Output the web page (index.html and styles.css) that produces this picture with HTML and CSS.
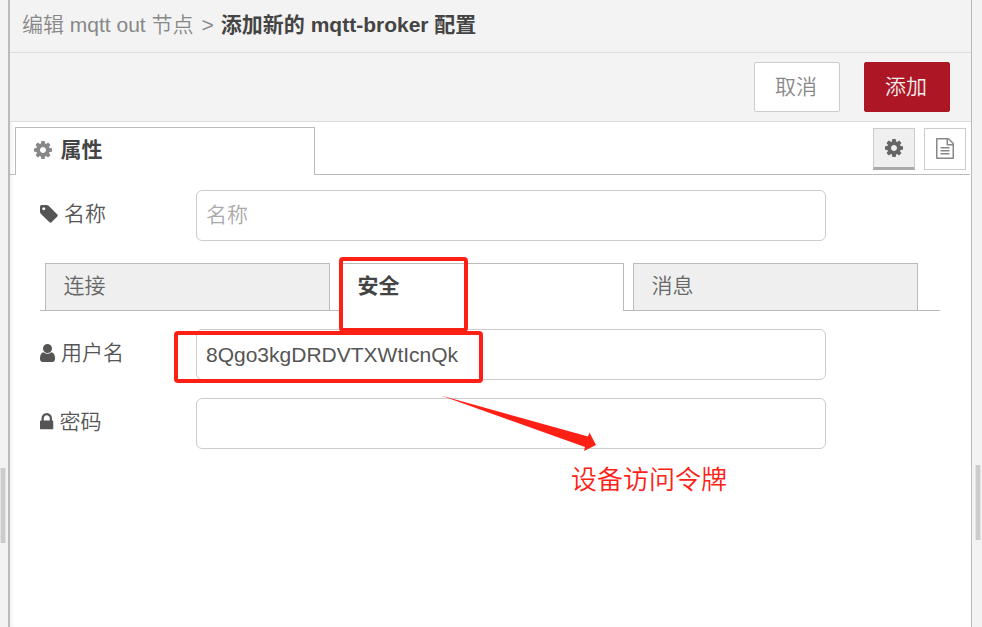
FILE: index.html
```html
<!DOCTYPE html>
<html lang="zh-CN">
<head>
<meta charset="utf-8">
<title>mqtt-broker 配置</title>
<link rel="stylesheet" href="styles.css">
</head>
<body>
<svg class="defs" width="0" height="0" aria-hidden="true">
  <symbol id="cog" viewBox="128 128 1536 1536"><path d="M1152 896q0-106-75-181t-181-75-181 75-75 181 75 181 181 75 181-75 75-181zm512-109v222q0 12-8 23t-20 13l-185 28q-19 54-39 91 35 50 107 138 10 12 10 25t-9 23q-27 37-99 108t-94 71q-12 0-26-9l-138-108q-44 23-91 38-16 136-29 186-7 28-36 28h-222q-14 0-24.500-8.500t-11.500-21.500l-28-184q-49-16-90-37l-141 107q-10 9-25 9-14 0-25-11-126-114-165-168-7-10-7-23 0-12 8-23 15-21 51-66.500t54-70.500q-27-50-41-99l-183-27q-13-2-21-12.500t-8-23.500v-222q0-12 8-23t19-13l186-28q14-46 39-92-40-57-107-138-10-12-10-24 0-10 9-23 26-36 98.500-107.500t94.500-71.500q13 0 26 10l138 107q44-23 91-38 16-136 29-186 7-28 36-28h222q14 0 24.500 8.500t11.500 21.500l28 184q49 16 90 37l142-107q9-9 24-9 13 0 25 10 129 119 165 170 7 8 7 22 0 12-8 23-15 21-51 66.500t-54 70.500q26 50 41 98l183 28q13 2 21 12.500t8 23.500z"/></symbol>
  <symbol id="file" viewBox="128 0 1536 1792"><path d="M1596 380q28 28 48 76t20 88v1152q0 40-28 68t-68 28h-1344q-40 0-68-28t-28-68v-1600q0-40 28-68t68-28h896q40 0 88 20t76 48zm-444-244v376h376q-10-29-22-41l-313-313q-12-12-41-22zm384 1528v-1024h-416q-40 0-68-28t-28-68v-416h-768v1536h1280zm-1024-864q0-14 9-23t23-9h704q14 0 23 9t9 23v64q0 14-9 23t-23 9h-704q-14 0-23-9t-9-23v-64zm736 224q14 0 23 9t9 23v64q0 14-9 23t-23 9h-704q-14 0-23-9t-9-23v-64q0-14 9-23t23-9h704zm0 256q14 0 23 9t9 23v64q0 14-9 23t-23 9h-704q-14 0-23-9t-9-23v-64q0-14 9-23t23-9h704z"/></symbol>
  <symbol id="tag" viewBox="128 128 1536 1536"><path d="M576 448q0-53-37.500-90.500t-90.500-37.500-90.500 37.500-37.500 90.500 37.500 90.500 90.500 37.500 90.500-37.500 37.500-90.500zm1067 576q0 53-37 90l-491 492q-39 37-91 37-53 0-90-37l-715-716q-38-37-64.500-101t-26.500-117v-416q0-52 38-90t90-38h416q53 0 117 26.500t102 64.500l715 714q37 39 37 91z"/></symbol>
  <symbol id="user" viewBox="256 128 1280 1536"><path d="M1536 1399q0 109-62.500 187t-150.500 78h-854q-88 0-150.500-78t-62.500-187q0-85 8.500-160.500t31.500-152 58.500-131 94-89 134.500-34.500q131 128 313 128t313-128q76 0 134.500 34.500t94 89 58.500 131 31.500 152 8.500 160.500zm-256-887q0 159-112.500 271.500t-271.500 112.500-271.500-112.500-112.500-271.500 112.500-271.500 271.500-112.500 271.500 112.500 112.500 271.500z"/></symbol>
  <symbol id="lock" viewBox="320 128 1152 1408"><path d="M640 768h512v-192q0-106-75-181t-181-75-181 75-75 181v192zm832 96v576q0 40-28 68t-68 28h-960q-40 0-68-28t-28-68v-576q0-40 28-68t68-28h32v-192q0-184 132-316t316-132 316 132 132 316v192h32q40 0 68 28t28 68z"/></symbol>
</svg>

<div class="editor">
  <div class="gutter gutter-left"><span class="grip"></span></div>

  <main class="tray">
    <header class="tray-header">
      <span>编辑 mqtt out 节点</span>
      <span class="sep">&gt;</span>
      <b>添加新的 mqtt-broker 配置</b>
    </header>
    <div class="toolbar">
      <button class="btn">取消</button>
      <button class="btn primary">添加</button>
    </div>

    <div class="main-tabs">
      <div class="main-tab"><svg class="icon cog"><use href="#cog"/></svg><span>属性</span></div>
      <div class="tab-buttons">
        <button class="icon-btn selected"><svg class="icon cog"><use href="#cog"/></svg></button>
        <button class="icon-btn"><svg class="icon file"><use href="#file"/></svg></button>
      </div>
    </div>

    <form class="form">
      <div class="row">
        <label for="name"><svg class="icon tag"><use href="#tag"/></svg>名称</label>
        <input id="name" type="text" placeholder="名称">
      </div>
      <div class="sub-tabs">
        <div class="sub-tab">连接</div>
        <div class="sub-tab active">安全</div>
        <div class="sub-tab">消息</div>
      </div>
      <div class="row">
        <label for="username"><svg class="icon user"><use href="#user"/></svg>用户名</label>
        <input id="username" type="text" value="8Qgo3kgDRDVTXWtIcnQk" spellcheck="false">
      </div>
      <div class="row">
        <label for="password"><svg class="icon lock"><use href="#lock"/></svg>密码</label>
        <input id="password" type="password">
      </div>
    </form>
  </main>

  <div class="gutter gutter-right"><span class="grip"></span></div>

  <div class="mark mark-tab"></div>
  <div class="mark mark-token"></div>
  <svg class="arrow" width="156" height="58" viewBox="0 0 156 58"><path d="M1 0.500L148 41.500L149.500 37.500L156 50L144 56L145 52Z"/></svg>
  <div class="note">设备访问令牌</div>
</div>
</body>
</html>
```
FILE: styles.css
```css
* { box-sizing: border-box; }

body {
  margin: 0;
  overflow: hidden;
  color: #555;
  font: 350 21px/30px "Liberation Sans", "Noto Sans CJK SC", sans-serif;
}

button, input { font: inherit; color: inherit; margin: 0; }

.defs { position: absolute; }

.icon { display: block; flex: none; fill: currentColor; }
.cog { width: 18px; height: 18px; }
.file { width: 18px; height: 21px; }
.tag { width: 18px; height: 18px; margin-right: 6px; }
.user { width: 15px; height: 18px; margin-right: 6px; }
.lock { width: 13.500px; height: 16.500px; margin-right: 6px; }

.editor {
  position: relative;
  display: grid;
  grid-template-columns: 8px 1fr 10px;
  width: 982px;
  height: 627px;
  background: #f3f3f3;
}

.grip {
  display: block;
  width: 6px;
  height: 75px;
  background: #ccc;
  border: solid #e3e3e3;
  border-width: 0 1px;
}
.gutter-left { padding-top: 468px; }
.gutter-right { padding: 465px 0 0 3px; }

.tray {
  background: #fff;
  border-left: 2px solid #bbb;
  border-right: 1px solid #bbb;
  box-shadow: inset 3px 0 4px -2px rgba(0, 0, 0, .08);
}

.tray-header {
  display: flex;
  height: 53px;
  padding: 10px 12px;
  background: #f3f3f3;
  border-bottom: 1px solid #ddd;
  color: #888;
  white-space: nowrap;
}
.tray-header .sep { margin: 0 7px 0 8px; }
.tray-header b { color: #444; font-weight: 700; }

.toolbar {
  display: flex;
  justify-content: flex-end;
  gap: 24px;
  height: 69px;
  padding: 9px 21px 9px 0;
  background: #f3f3f3;
  border-bottom: 1px solid #ddd;
}
.btn {
  width: 86px;
  height: 50px;
  padding: 0 2px 0 0;
  background: #fff;
  border: 1px solid #ccc;
  border-radius: 2px;
  color: #888;
}
.primary { background: #ad1625; border-color: #ad1625; color: #eee; }

.main-tabs {
  display: flex;
  justify-content: space-between;
  height: 53px;
  margin-right: 1px;
  padding: 5px 4px 0 5px;
  background: linear-gradient(#bbb, #bbb) bottom / 100% 1px no-repeat;
}
.main-tab {
  display: flex;
  align-items: center;
  gap: 9px;
  width: 300px;
  height: 48px;
  padding: 0 18px 4px 17.500px;
  background: #fff;
  border: 1px solid #bbb;
  border-bottom: 0;
  color: #444;
  font-weight: 700;
}
.main-tab .icon { color: #888; }

.tab-buttons { display: flex; gap: 9px; padding-top: 1px; }
.icon-btn {
  display: grid;
  place-items: center;
  width: 42px;
  height: 42px;
  padding: 0 0 1px;
  background: #fff;
  border: 1px solid #ccc;
  color: #888;
}
.icon-btn.selected {
  padding: 0;
  background: #efefef;
  border-bottom: 3px solid #aaa;
  color: #666;
}

.form { padding: 15px 31px 0 30px; }
.row {
  display: grid;
  grid-template-columns: 156px 630px;
  height: 51px;
  margin-bottom: 18px;
}
.row label { display: flex; align-items: center; padding-bottom: 4px; }
.row input {
  width: 630px;
  height: 51px;
  padding: 0 9px;
  background: #fff;
  border: 1px solid #ccc;
  border-radius: 6px;
  outline: 0;
}
#name { padding-bottom: 2px; }
.row input::placeholder { color: #aaa; opacity: 1; }

.sub-tabs {
  display: flex;
  gap: 9px;
  height: 48px;
  margin: 22px 0 18px;
  padding-left: 5px;
  background: linear-gradient(#bbb, #bbb) bottom / 100% 1px no-repeat;
}
.sub-tab {
  width: 285px;
  height: 47px;
  padding: 7px 17.500px;
  background: #efefef;
  border: 1px solid #bbb;
  border-bottom: 0;
  color: #666;
}
.sub-tab.active { height: 48px; background: #fff; color: #444; font-weight: 700; }

/* Callouts laid over the form */
.mark { position: absolute; border: 4px solid #ff2015; border-radius: 4px; }
.mark-tab { left: 339px; top: 257px; width: 129px; height: 75px; }
.mark-token { left: 174px; top: 331px; width: 309px; height: 52px; }
.arrow { position: absolute; left: 440px; top: 395px; fill: #ff2015; }
.note {
  position: absolute;
  left: 571px;
  top: 461px;
  color: #ff2015;
  font-size: 26px;
  line-height: 38px;
  white-space: nowrap;
}
```
